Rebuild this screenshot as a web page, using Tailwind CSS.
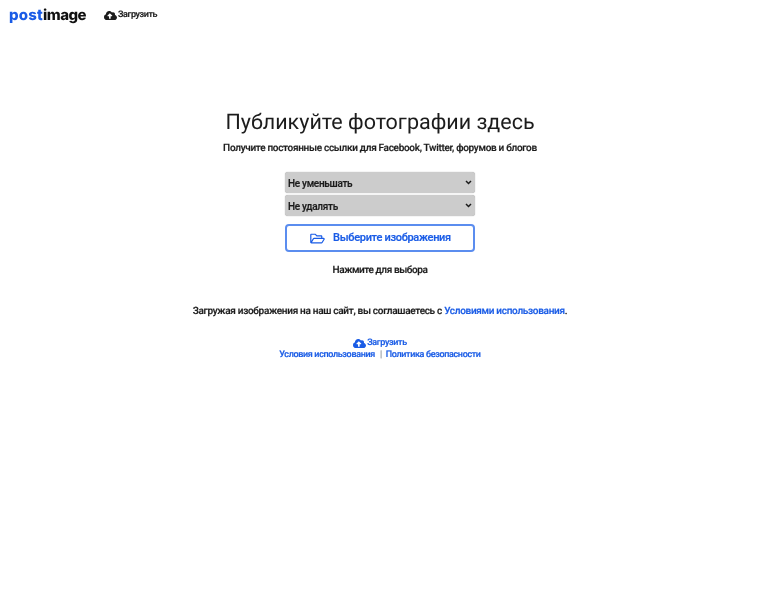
<!DOCTYPE html>
<html lang="ru">
<head>
<meta charset="UTF-8">
<title>Postimage</title>
<script src="https://cdn.jsdelivr.net/npm/@tailwindcss/browser@4"></script>
</head>
<body class="bg-white font-['Roboto',sans-serif] text-[#1c1c1c] [text-rendering:geometricPrecision]">
  <div class="blur-[0.3px]">
    <!-- Header -->
    <header class="flex items-center h-[29px] pl-[9px]">
        <a href="#" class="flex items-baseline w-[77px] font-['Inter',sans-serif] font-extrabold text-[15px] leading-none">
            <span class="text-[#1a5ce6] tracking-[0.2px]">post</span><span class="text-[#111] tracking-[-0.5px]">image</span>
        </a>
        <a href="#" class="flex items-center ml-[18px] mt-[2px] text-[9px] tracking-[-0.4px] font-medium [-webkit-text-stroke:0.2px] text-[#1c1c1c]">
            <svg class="w-[13px] h-[11px] mr-[1px]" viewBox="0 0 640 512" fill="#1c1c1c"><path d="M537.6 226.6c4.1-10.7 6.4-22.4 6.4-34.6 0-53-43-96-96-96-19.7 0-38.1 6-53.3 16.2C367 64.2 315.3 32 256 32c-88.4 0-160 71.6-160 160 0 2.7.1 5.4.2 8.1C40.2 219.8 0 273.2 0 336c0 79.5 64.5 144 144 144h368c70.7 0 128-57.3 128-128 0-61.9-44-113.6-102.4-125.4zM393.4 288H328v112c0 8.8-7.2 16-16 16h-48c-8.8 0-16-7.2-16-16V288h-65.4c-14.3 0-21.4-17.2-11.3-27.3l105.4-105.4c6.2-6.2 16.4-6.2 22.6 0l105.4 105.4c10.1 10.1 2.9 27.3-11.3 27.3z"/></svg>
            Загрузить
        </a>
    </header>

    <main class="flex flex-col items-center">
        <h1 class="mt-[79px] text-[21.5px] leading-[30px]">Публикуйте фотографии здесь</h1>
        <p class="mt-[2px] text-[10px] tracking-[-0.3px] leading-[18px] font-medium [-webkit-text-stroke:0.2px]">Получите постоянные ссылки для Facebook, Twitter, форумов и блогов</p>

        <div class="mt-[14px] w-[190px] flex flex-col gap-[2px]">
            <div class="relative">
                <select class="block appearance-none w-full h-[21px] pl-[3px] pt-[1px] rounded-[3px] bg-[#cccccc] shadow-[0_0_1px_#999] text-[10px] tracking-[-0.3px] font-medium [-webkit-text-stroke:0.2px] text-[#1c1c1c]">
                    <option>Не уменьшать</option>
                </select>
                <svg class="absolute right-[3px] top-[8px] w-[7px] h-[5px]" viewBox="0 0 14 10" fill="none" stroke="#1c1c1c" stroke-width="3"><path d="M2 2l5 5 5-5"/></svg>
            </div>
            <div class="relative">
                <select class="block appearance-none w-full h-[21px] pl-[3px] pt-[1px] rounded-[3px] bg-[#cccccc] shadow-[0_0_1px_#999] text-[10px] tracking-[-0.3px] font-medium [-webkit-text-stroke:0.2px] text-[#1c1c1c]">
                    <option>Не удалять</option>
                </select>
                <svg class="absolute right-[3px] top-[8px] w-[7px] h-[5px]" viewBox="0 0 14 10" fill="none" stroke="#1c1c1c" stroke-width="3"><path d="M2 2l5 5 5-5"/></svg>
            </div>
        </div>

        <button class="mt-[8px] w-[190px] h-[28px] flex items-center justify-center border-2 border-[#5b8def] rounded-[4px] text-[#1a5ce6] text-[11px] tracking-[-0.3px] font-medium [-webkit-text-stroke:0.2px]">
            <svg class="w-[17px] h-[13px] mr-[7px]" viewBox="0 0 576 512" fill="#1a5ce6"><path d="M527.9 224H480v-48c0-26.5-21.5-48-48-48H272l-64-64H48C21.5 64 0 85.5 0 112v288c0 26.5 21.5 48 48 48h400c16.5 0 31.9-8.5 40.7-22.6l79.9-128c20-31.9-3-73.4-40.7-73.4zM48 118c0-3.3 2.7-6 6-6h134.1l64 64H426c3.3 0 6 2.7 6 6v42H152c-16.8 0-32.4 8.8-41.1 23.2L48 351.4zm400 282H72l77.2-128H528z"/></svg>
            Выберите изображения
        </button>

        <p class="mt-[10px] text-[10px] tracking-[-0.4px] leading-[18px] font-medium [-webkit-text-stroke:0.2px]">Нажмите для выбора</p>

        <p class="mt-[23px] text-[10px] tracking-[-0.3px] leading-[18px] font-medium [-webkit-text-stroke:0.2px]">Загружая изображения на наш сайт, вы соглашаетесь с <a href="#" class="text-[#1a5ce6]">Условиями использования</a>.</p>

        <footer class="mt-[16px] flex flex-col items-center text-[#1a5ce6] text-[9px] tracking-[-0.35px] font-medium [-webkit-text-stroke:0.2px] leading-[12px]">
            <a href="#" class="flex items-center">
                <svg class="w-[13px] h-[11px] mr-[1px]" viewBox="0 0 640 512" fill="#1a5ce6"><path d="M537.6 226.6c4.1-10.7 6.4-22.4 6.4-34.6 0-53-43-96-96-96-19.7 0-38.1 6-53.3 16.2C367 64.2 315.3 32 256 32c-88.4 0-160 71.6-160 160 0 2.7.1 5.4.2 8.1C40.2 219.8 0 273.2 0 336c0 79.5 64.5 144 144 144h368c70.7 0 128-57.3 128-128 0-61.9-44-113.6-102.4-125.4zM393.4 288H328v112c0 8.8-7.2 16-16 16h-48c-8.8 0-16-7.2-16-16V288h-65.4c-14.3 0-21.4-17.2-11.3-27.3l105.4-105.4c6.2-6.2 16.4-6.2 22.6 0l105.4 105.4c10.1 10.1 2.9 27.3-11.3 27.3z"/></svg>
                Загрузить
            </a>
            <div class="flex items-center">
                <a href="#">Условия использования</a>
                <span class="ml-[5px] mr-[4px] text-[#9aa0a6] text-[9px]">|</span>
                <a href="#">Политика безопасности</a>
            </div>
        </footer>
    </main>
  </div>
</body>
</html>
